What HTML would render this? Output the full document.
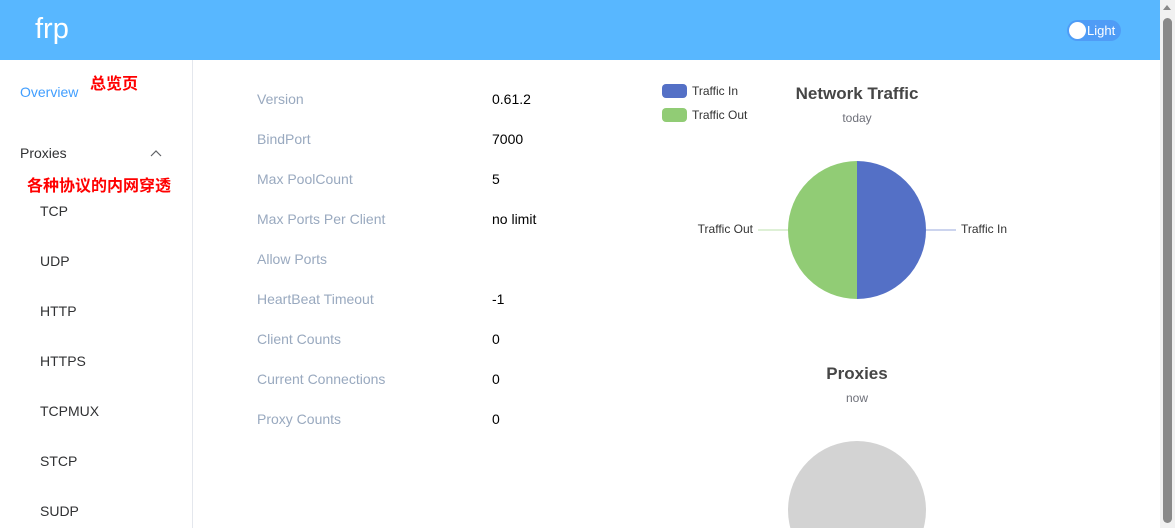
<!DOCTYPE html>
<html><head><meta charset="utf-8">
<style>
*{margin:0;padding:0;box-sizing:border-box}
html,body{width:1175px;height:528px;overflow:hidden;background:#fff;font-family:"Liberation Sans","Noto Sans CJK SC",sans-serif}
.hdr{position:absolute;left:0;top:0;width:1160px;height:60px;background:#58b7ff}
.logo{position:absolute;left:35px;top:13px;color:#fff;font-size:29px}
.tog{position:absolute;left:1067px;top:20px;width:54px;height:21px;border-radius:11px;background:#4f9cf6}
.tog .k{position:absolute;left:2px;top:2px;width:17px;height:17px;border-radius:50%;background:#fff}
.tog span{position:absolute;left:20px;top:3px;color:#fff;font-size:13px}
.side{position:absolute;left:0;top:60px;width:193px;height:468px;border-right:1px solid #e4e7ed}
.si{position:absolute;font-size:14px;color:#303133}
.red{position:absolute;color:#f00;font-size:16px;font-weight:bold}
.lab{position:absolute;left:257px;font-size:14px;color:#99a9bf}
.val{position:absolute;left:492px;font-size:14px;color:#000}
.sb{position:absolute;left:1160px;top:0;width:15px;height:528px;background:#f1f1f1;overflow:hidden}
.sb .t{position:absolute;left:3px;top:18px;width:9px;height:505px;background:#898989;border-radius:5px}
.sb .a{position:absolute;left:3px;top:5px;width:0;height:0;border-left:4px solid transparent;border-right:4px solid transparent;border-bottom:5px solid #898989}
</style></head><body>
<div class="hdr"><div class="logo">frp</div><div class="tog"><div class="k"></div><span>Light</span></div></div>
<div class="side">
<div class="si" style="left:20px;top:24px;color:#409eff">Overview</div>
<div class="red" style="left:90px;top:10px">总览页</div>
<div class="si" style="left:20px;top:85px">Proxies</div>
<svg style="position:absolute;left:150px;top:90px" width="12" height="8"><path d="M1 6 L6 1 L11 6" stroke="#606266" fill="none" stroke-width="1.2"/></svg>
<div class="red" style="left:27px;top:112px">各种协议的内网穿透</div>
<div class="si" style="left:40px;top:143px">TCP</div>
<div class="si" style="left:40px;top:193px">UDP</div>
<div class="si" style="left:40px;top:243px">HTTP</div>
<div class="si" style="left:40px;top:293px">HTTPS</div>
<div class="si" style="left:40px;top:343px">TCPMUX</div>
<div class="si" style="left:40px;top:393px">STCP</div>
<div class="si" style="left:40px;top:443px">SUDP</div>
</div>
<div class="lab" style="top:91px">Version</div><div class="val" style="top:91px">0.61.2</div>
<div class="lab" style="top:131px">BindPort</div><div class="val" style="top:131px">7000</div>
<div class="lab" style="top:171px">Max PoolCount</div><div class="val" style="top:171px">5</div>
<div class="lab" style="top:211px">Max Ports Per Client</div><div class="val" style="top:211px">no limit</div>
<div class="lab" style="top:251px">Allow Ports</div>
<div class="lab" style="top:291px">HeartBeat Timeout</div><div class="val" style="top:291px">-1</div>
<div class="lab" style="top:331px">Client Counts</div><div class="val" style="top:331px">0</div>
<div class="lab" style="top:371px">Current Connections</div><div class="val" style="top:371px">0</div>
<div class="lab" style="top:411px">Proxy Counts</div><div class="val" style="top:411px">0</div>
<svg style="position:absolute;left:640px;top:60px" width="520" height="468" font-family="Liberation Sans, sans-serif">
<rect x="22" y="24" width="25" height="14" rx="4" fill="#5470c6"/>
<text x="52" y="35" font-size="12" fill="#333">Traffic In</text>
<rect x="22" y="48" width="25" height="14" rx="4" fill="#91cc75"/>
<text x="52" y="59" font-size="12" fill="#333">Traffic Out</text>
<text x="217" y="39" font-size="17" font-weight="bold" fill="#464646" text-anchor="middle">Network Traffic</text>
<text x="217" y="62" font-size="12" fill="#6e7079" text-anchor="middle">today</text>
<path d="M217 101 A69 69 0 0 1 217 239 Z" fill="#5470c6"/>
<path d="M217 101 A69 69 0 0 0 217 239 Z" fill="#91cc75"/>
<line x1="286" y1="170" x2="316" y2="170" stroke="#5470c6" stroke-opacity=".6"/>
<line x1="118" y1="170" x2="148" y2="170" stroke="#91cc75" stroke-opacity=".6"/>
<text x="321" y="173" font-size="12" fill="#333">Traffic In</text>
<text x="113" y="173" font-size="12" fill="#333" text-anchor="end">Traffic Out</text>
<text x="217" y="319" font-size="17" font-weight="bold" fill="#464646" text-anchor="middle">Proxies</text>
<text x="217" y="342" font-size="12" fill="#6e7079" text-anchor="middle">now</text>
<circle cx="217" cy="450" r="69" fill="#d3d3d3"/>
</svg>
<div class="sb"><div class="a"></div><div class="t"></div></div>
</body></html>
